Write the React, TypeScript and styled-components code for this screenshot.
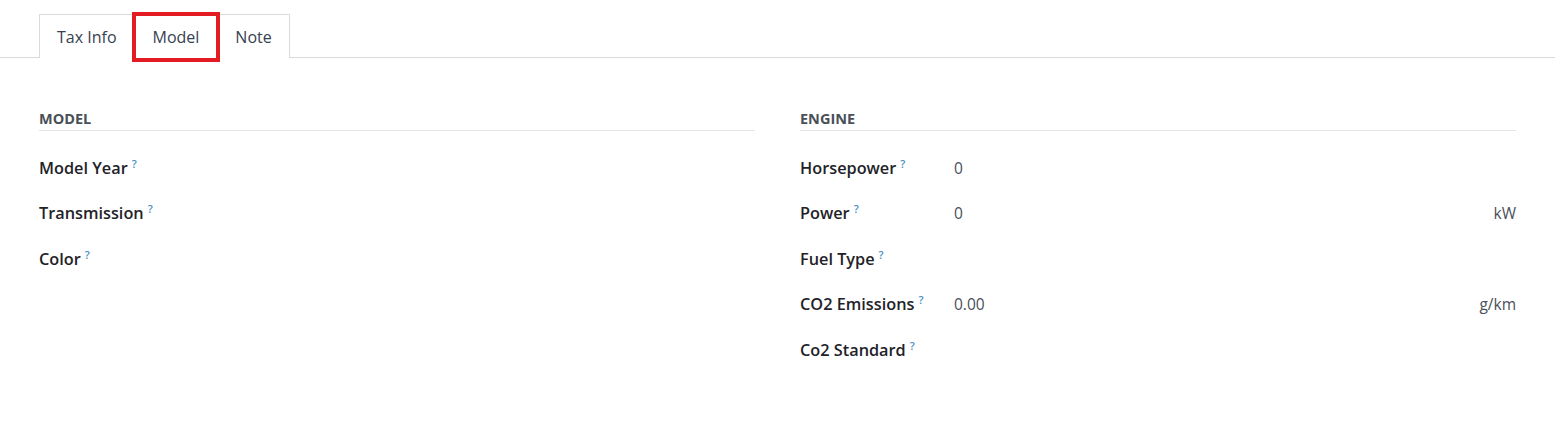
import React from 'react';
import styled, { createGlobalStyle } from 'styled-components';

const GlobalStyle = createGlobalStyle`
  body {
    margin: 0;
    background: #fff;
    font-family: "Open Sans", "Noto Sans", sans-serif;
    color: #212529;
  }
`;

const Page = styled.div`
  width: 1555px;
  height: 426px;
  background: #fff;
  padding-top: 14px;
  box-sizing: border-box;
`;

const TabBar = styled.div`
  display: flex;
  padding: 0 39px;
  border-bottom: 1px solid #d8dadd;
`;

const Tabs = styled.div`
  display: flex;
  border: 1px solid #d8dadd;
  border-bottom: none;
  margin-bottom: -1px;
`;

const Tab = styled.div<{ $marked?: boolean }>`
  position: relative;
  z-index: ${p => (p.$marked ? 2 : 1)};
  height: 43px;
  display: flex;
  align-items: center;
  padding: 0 ${p => (p.$marked ? '19px' : '17px')};
  font-size: 16px;
  color: #374151;
  background: #fff;
  ${p =>
    p.$marked &&
    `
    &::after {
      content: '';
      position: absolute;
      left: -2px;
      right: -2px;
      top: -3px;
      bottom: -4px;
      border: 4px solid #e31b23;
    }
  `}
`;

const Sheet = styled.div`
  display: grid;
  grid-template-columns: 716px 716px;
  column-gap: 45px;
  padding: 51px 39px 0;
`;

const Group = styled.div`
  display: flex;
  flex-direction: column;
`;

const GroupTitle = styled.div`
  font-size: 14.5px;
  font-weight: 700;
  color: #495057;
  text-transform: uppercase;
  padding-bottom: 2px;
  border-bottom: 1px solid #e3e4e6;
  margin-bottom: 14px;
`;

const Row = styled.div`
  display: grid;
  grid-template-columns: 154px 1fr auto;
  align-items: center;
  height: 45.5px;
`;

const Label = styled.div`
  font-size: 16.3px;
  font-weight: 600;
  color: #1f2329;
`;

const Help = styled.sup`
  font-size: 11px;
  font-weight: 600;
  color: #4a8fc0;
  margin-left: 4px;
  vertical-align: 6px;
  line-height: 0;
`;

const Value = styled.div`
  font-size: 15.5px;
  color: #4a4f59;
`;

const Unit = styled.div`
  font-size: 15.5px;
  color: #4a4f59;
  text-align: right;
`;

type Field = { label: string; value?: string; unit?: string };

const modelFields: Field[] = [
  { label: 'Model Year' },
  { label: 'Transmission' },
  { label: 'Color' },
];

const engineFields: Field[] = [
  { label: 'Horsepower', value: '0' },
  { label: 'Power', value: '0', unit: 'kW' },
  { label: 'Fuel Type' },
  { label: 'CO2 Emissions', value: '0.00', unit: 'g/km' },
  { label: 'Co2 Standard' },
];

const FieldGroup = ({ title, fields }: { title: string; fields: Field[] }) => (
  <Group>
    <GroupTitle>{title}</GroupTitle>
    {fields.map(f => (
      <Row key={f.label}>
        <Label>
          {f.label}
          <Help>?</Help>
        </Label>
        <Value>{f.value}</Value>
        <Unit>{f.unit}</Unit>
      </Row>
    ))}
  </Group>
);

export default function App() {
  return (
    <Page>
      <GlobalStyle />
      <TabBar>
        <Tabs>
          <Tab>Tax Info</Tab>
          <Tab $marked>Model</Tab>
          <Tab>Note</Tab>
        </Tabs>
      </TabBar>
      <Sheet>
        <FieldGroup title="Model" fields={modelFields} />
        <FieldGroup title="Engine" fields={engineFields} />
      </Sheet>
    </Page>
  );
}
